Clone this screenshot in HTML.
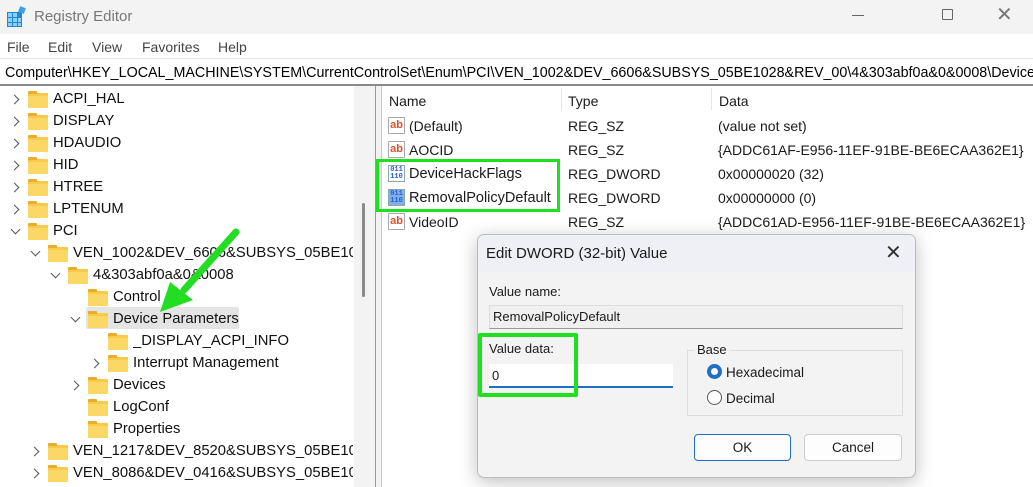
<!DOCTYPE html><html><head><style>
*{margin:0;padding:0;box-sizing:border-box}
body{width:1033px;height:487px;overflow:hidden;background:#fff;font-family:"Liberation Sans",sans-serif;font-size:14px;color:#1a1a1a;position:relative}
.a{position:absolute;white-space:nowrap}
.f{position:absolute;width:20px;height:15px;background:#f8c94a;border-radius:1px}
.f:before{content:"";position:absolute;left:0;top:-2px;width:9px;height:3px;background:#e9ad2a;border-radius:1px 1px 0 0}
.f:after{content:"";position:absolute;left:0;top:3px;width:20px;height:12px;background:#fbd766}
.ch{position:absolute;width:7px;height:7px;border-right:1.3px solid #555;border-bottom:1.3px solid #555}
.r{transform:rotate(-45deg)}.d{transform:rotate(45deg)}
.ic{position:absolute;width:17px;height:17px;border:1px solid #aaa;background:#fff;border-radius:1px;font-size:11px;font-weight:bold;color:#d9532c;line-height:14px;text-align:center}
.bn{position:absolute;width:17px;height:17px;border:1px solid #8aa;font-size:7px;line-height:7px;color:#2a5bd7;font-weight:bold;text-align:center;padding-top:1px;font-family:"Liberation Mono",monospace}
</style></head><body>
<div class="a" style="left:0;top:0;width:1033px;height:34px;background:#f3f3f3"></div>
<svg class="a" style="left:7px;top:6px" width="22" height="22"><rect x="0" y="6" width="15" height="15" fill="#1e88d6"/><g fill="#8cd0f6"><rect x="1" y="7" width="4" height="4"/><rect x="6" y="7" width="4" height="4"/><rect x="1" y="12" width="4" height="4"/><rect x="6" y="12" width="4" height="4"/><rect x="11" y="12" width="3" height="4"/><rect x="1" y="17" width="4" height="3"/><rect x="6" y="17" width="4" height="3"/><rect x="11" y="17" width="3" height="3"/></g><rect x="12" y="1" width="6" height="6" fill="#3aa0e8" transform="rotate(20 15 4)"/></svg>
<div class="a" style="left:34px;top:8px;font-size:15px;color:#777">Registry Editor</div>
<div class="a" style="left:852px;top:15px;width:12px;height:1px;background:#666"></div>
<div class="a" style="left:942px;top:9px;width:11px;height:11px;border:1px solid #666;border-radius:1px"></div>
<div class="a" style="left:996px;top:2px;font-size:20px;color:#777">✕</div>
<div class="a" style="left:7px;top:39px;color:#444">File</div>
<div class="a" style="left:48px;top:39px;color:#444">Edit</div>
<div class="a" style="left:92px;top:39px;color:#444">View</div>
<div class="a" style="left:142px;top:39px;color:#444">Favorites</div>
<div class="a" style="left:218px;top:39px;color:#444">Help</div>
<div class="a" style="left:0;top:58px;width:1033px;height:1px;background:#e5e5e5"></div>
<div class="a" style="left:0;top:59px;width:1033px;height:25px;overflow:hidden"><div class="a" style="left:5px;top:6px;color:#000;font-size:14.3px">Computer\HKEY_LOCAL_MACHINE\SYSTEM\CurrentControlSet\Enum\PCI\VEN_1002&amp;DEV_6606&amp;SUBSYS_05BE1028&amp;REV_00\4&amp;303abf0a&amp;0&amp;0008\Device Parameters</div></div>
<div class="a" style="left:0;top:84px;width:1033px;height:2px;background:#8a8a8a"></div>
<div class="a" style="left:354px;top:86px;width:21px;height:401px;background:#f3f3f3"></div>
<div class="a" style="left:362px;top:203px;width:3px;height:94px;background:#8a8a8a;border-radius:2px"></div>
<div class="a" style="left:375px;top:86px;width:1px;height:401px;background:#999"></div>
<div class="a" style="left:376px;top:86px;width:5px;height:401px;background:#f3f3f3"></div>
<div class="a" style="left:381px;top:86px;width:1px;height:401px;background:#ccc"></div>
<div class="a" style="left:86px;top:307px;width:153px;height:22px;background:#e4e4e4;border-radius:2px"></div>
<div class="a" style="left:389px;top:93px">Name</div>
<div class="a" style="left:561px;top:88px;width:1px;height:22px;background:#e5e5e5"></div>
<div class="a" style="left:568px;top:93px">Type</div>
<div class="a" style="left:711px;top:88px;width:1px;height:22px;background:#e5e5e5"></div>
<div class="a" style="left:719px;top:93px">Data</div>
<div class="ic" style="left:388px;top:117px">ab</div><div class="a" style="left:409px;top:118px">(Default)</div><div class="a" style="left:568px;top:118px">REG_SZ</div><div class="a" style="left:718px;top:118px">(value not set)</div>
<div class="ic" style="left:388px;top:141px">ab</div><div class="a" style="left:409px;top:142px">AOCID</div><div class="a" style="left:568px;top:142px">REG_SZ</div><div class="a" style="left:718px;top:142px">{ADDC61AF-E956-11EF-91BE-BE6ECAA362E1}</div>
<div class="bn" style="left:388px;top:165px;background:#fff">011<br>110</div><div class="a" style="left:409px;top:166px;font-size:14.5px">DeviceHackFlags</div><div class="a" style="left:568px;top:166px">REG_DWORD</div><div class="a" style="left:718px;top:166px">0x00000020 (32)</div>
<div class="bn" style="left:388px;top:189px;background:#7fb3e8">011<br>110</div><div class="a" style="left:409px;top:190px;font-size:14.5px">RemovalPolicyDefault</div><div class="a" style="left:568px;top:190px">REG_DWORD</div><div class="a" style="left:718px;top:190px">0x00000000 (0)</div>
<div class="ic" style="left:388px;top:213px">ab</div><div class="a" style="left:409px;top:214px">VideoID</div><div class="a" style="left:568px;top:214px">REG_SZ</div><div class="a" style="left:718px;top:214px">{ADDC61AD-E956-11EF-91BE-BE6ECAA362E1}</div>
<div class="a" style="left:376px;top:159px;width:184px;height:53px;border:3px solid #1ee11e"></div>
<div class="a" style="left:477px;top:234px;width:439px;height:244px;background:#f3f3f3;border:1px solid #bbb;border-radius:7px;box-shadow:0 4px 18px rgba(0,0,0,.25);overflow:hidden">
<div style="height:37px;background:#eef0f5"></div></div>
<div class="a" style="left:486px;top:245px;font-size:15px">Edit DWORD (32-bit) Value</div>
<div class="a" style="left:885px;top:240px;font-size:20px;color:#333">✕</div>
<div class="a" style="left:489px;top:284px;font-size:13px">Value name:</div>
<div class="a" style="left:489px;top:305px;width:414px;height:24px;background:#f0f0f0;border:1px solid #ddd;border-bottom-color:#999;padding:3px 3px;font-size:13px">RemovalPolicyDefault</div>
<div class="a" style="left:489px;top:341px;font-size:13px">Value data:</div>
<div class="a" style="left:489px;top:364px;width:184px;height:24px;background:#fff;border-bottom:2px solid #1f6fc5;padding:4px 3px;font-size:13px">0</div>
<div class="a" style="left:687px;top:350px;width:216px;height:66px;border:1px solid #dcdcdc"></div>
<div class="a" style="left:694px;top:342px;background:#f3f3f3;padding:0 3px;font-size:13px">Base</div>
<div class="a" style="left:707px;top:364px;width:15px;height:15px;border-radius:50%;background:#1f6fc5"><div style="margin:4px;width:7px;height:7px;border-radius:50%;background:#fff"></div></div>
<div class="a" style="left:726px;top:365px;font-size:13.5px">Hexadecimal</div>
<div class="a" style="left:707px;top:390px;width:15px;height:15px;border-radius:50%;border:1px solid #555;background:#fff"></div>
<div class="a" style="left:726px;top:391px;font-size:13.5px">Decimal</div>
<div class="a" style="left:694px;top:434px;width:97px;height:27px;background:#fdfdfd;border:1px solid #1f6fc5;border-radius:4px;text-align:center;line-height:25px;font-size:13.5px">OK</div>
<div class="a" style="left:804px;top:434px;width:98px;height:27px;background:#fdfdfd;border:1px solid #ccc;border-radius:4px;text-align:center;line-height:25px;font-size:13.5px">Cancel</div>
<div class="a" style="left:478px;top:333px;width:100px;height:64px;border:4px solid #1ee11e;border-radius:2px"></div>
<div id="t"></div>
<script>
var items=[[0,"ACPI_HAL","r"],[0,"DISPLAY","r"],[0,"HDAUDIO","r"],[0,"HID","r"],[0,"HTREE","r"],[0,"LPTENUM","r"],[0,"PCI","d"],[1,"VEN_1002&DEV_6606&SUBSYS_05BE1028&REV_00","d"],[2,"4&303abf0a&0&0008","d"],[3,"Control",""],[3,"Device Parameters","d"],[4,"_DISPLAY_ACPI_INFO",""],[4,"Interrupt Management","r"],[3,"Devices","r"],[3,"LogConf",""],[3,"Properties",""],[1,"VEN_1217&DEV_8520&SUBSYS_05BE1028&REV_01","r"],[1,"VEN_8086&DEV_0416&SUBSYS_05BE1028&REV_06","r"]];
var h="";items.forEach(function(it,i){var y=90+i*22,x=28+it[0]*20;
if(it[2]=="r")h+='<div class="ch r" style="left:'+(x-17)+'px;top:'+(y+6)+'px"></div>';
if(it[2]=="d")h+='<div class="ch d" style="left:'+(x-16)+'px;top:'+(y+4)+'px"></div>';
h+='<div class="f" style="left:'+x+'px;top:'+(y+3)+'px"></div>';
h+='<div class="a" style="left:'+(x+25)+'px;top:'+(y+1)+'px;font-size:14.8px;color:#111;max-width:'+(353-x-25)+'px;overflow:hidden">'+it[1].replace(/&/g,"&amp;")+'</div>';});
document.getElementById("t").innerHTML=h;
</script>
<svg class="a" style="left:0;top:0" width="1033" height="487"><path d="M236 232 L184 290" stroke="#22dd22" stroke-width="7" stroke-linecap="round"/><polygon points="160,312 170,282 193,300" fill="#22dd22"/></svg>
</body></html>
